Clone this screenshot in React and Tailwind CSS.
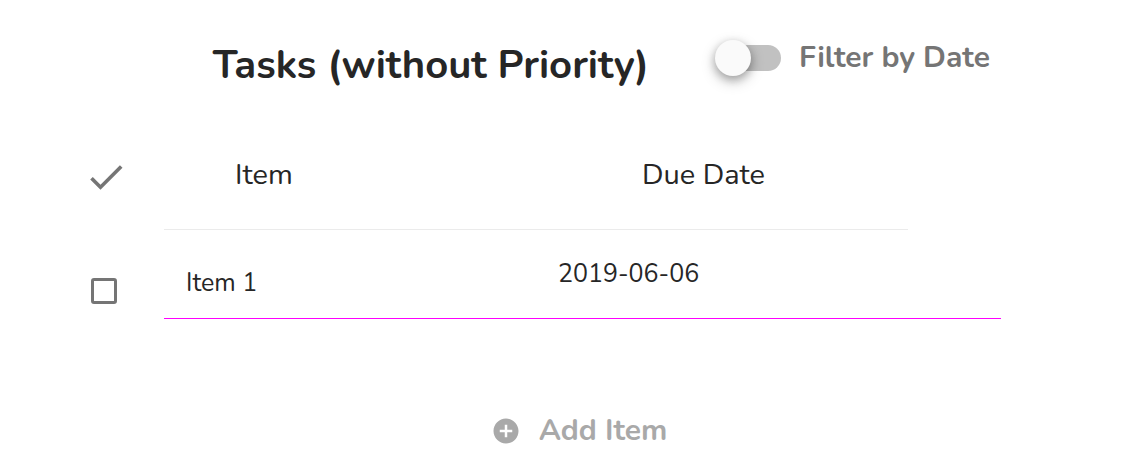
import { useState } from "react";

function Switch({ label, checked, onChange }) {
  return (
    <label className="flex cursor-pointer items-center gap-[18px] text-3xl font-bold text-[#757575]">
      <span className="relative flex h-9 w-[66px] items-center justify-end">
        <input
          type="checkbox"
          role="switch"
          checked={checked}
          onChange={(e) => onChange(e.target.checked)}
          className="peer sr-only"
        />
        <span className="h-[26px] w-[61px] rounded-full bg-[#c1c1c1]" />
        <span className="absolute left-0 top-0 size-9 rounded-full bg-[#fafafa] shadow-[0_3px_8px_rgba(0,0,0,0.22),0_5px_14px_rgba(0,0,0,0.25)] peer-checked:left-[30px]" />
      </span>
      <span className="whitespace-nowrap">{label}</span>
    </label>
  );
}

function TaskRow({ task }) {
  const [done, setDone] = useState(false);
  return (
    <tr className="align-top">
      <td className="pl-5 pt-12">
        <input
          type="checkbox"
          aria-label={`Complete ${task.name}`}
          checked={done}
          onChange={(e) => setDone(e.target.checked)}
          className="block size-[26px] appearance-none rounded-[3px] border-3 border-[#757575] bg-white checked:bg-[#757575]"
        />
      </td>
      <td className="h-[89px] border-b border-[#f0f] pl-[22px] pt-[38px]">
        <input
          aria-label="Item"
          defaultValue={task.name}
          className="block h-8 w-full bg-transparent text-[25px] outline-none"
        />
      </td>
      <td className="border-b border-[#f0f] pl-[22px] pt-[29px]">
        <input
          aria-label="Due date"
          defaultValue={task.due}
          className="block h-8 w-full bg-transparent text-[25px] outline-none"
        />
      </td>
      <td className="border-b border-[#f0f]" />
    </tr>
  );
}

const initialTasks = [{ name: "Item 1", due: "2019-06-06" }];

export default function App() {
  const [byDate, setByDate] = useState(false);
  const [tasks, setTasks] = useState(initialTasks);

  return (
    <main className="bg-white pl-[71px] pr-[145px] font-['Nunito','Lato',sans-serif] text-[#262626]">
      <header className="flex items-start justify-end gap-[66px] pr-[11px] pt-10">
        <h1 className="whitespace-nowrap text-[40px] font-bold leading-[50px]">
          Tasks (without Priority)
        </h1>
        <Switch label="Filter by Date" checked={byDate} onChange={setByDate} />
      </header>

      <table className="mt-[52px] w-full table-fixed border-separate border-spacing-0 text-left">
        <thead>
          <tr className="align-top">
            <td className="w-[10%] pl-[13px] pt-[13px]">
              <svg viewBox="0 0 24 24" className="size-11" fill="#757575" aria-label="Done">
                <path d="M9 16.2 4.8 12l-1.4 1.4L9 19 21 7l-1.4-1.4z" />
              </svg>
            </td>
            <th className="h-[88px] w-[40%] border-b border-[#ebebeb] pl-[71px] pt-[15px] text-[29px] font-normal leading-9">
              Item
            </th>
            <th className="w-[40%] border-b border-[#ebebeb] pl-[106px] pt-[15px] text-[29px] font-normal leading-9">
              Due Date
            </th>
            <td className="w-[10%]" />
          </tr>
        </thead>
        <tbody>
          {tasks.map((task, i) => (
            <TaskRow key={i} task={task} />
          ))}
        </tbody>
      </table>

      <div className="flex justify-center pb-4 pt-[94px] pl-[86px]">
        <button
          type="button"
          onClick={() => setTasks([...tasks, { name: "", due: "" }])}
          className="flex items-center gap-[18px] text-3xl font-bold text-[#a9a9a9]"
        >
          <svg viewBox="0 0 24 24" className="size-[30px]" fill="currentColor" aria-hidden="true">
            <path d="M12 2C6.48 2 2 6.48 2 12s4.48 10 10 10 10-4.48 10-10S17.52 2 12 2zm5 11h-4v4h-2v-4H7v-2h4V7h2v4h4v2z" />
          </svg>
          Add Item
        </button>
      </div>
    </main>
  );
}
